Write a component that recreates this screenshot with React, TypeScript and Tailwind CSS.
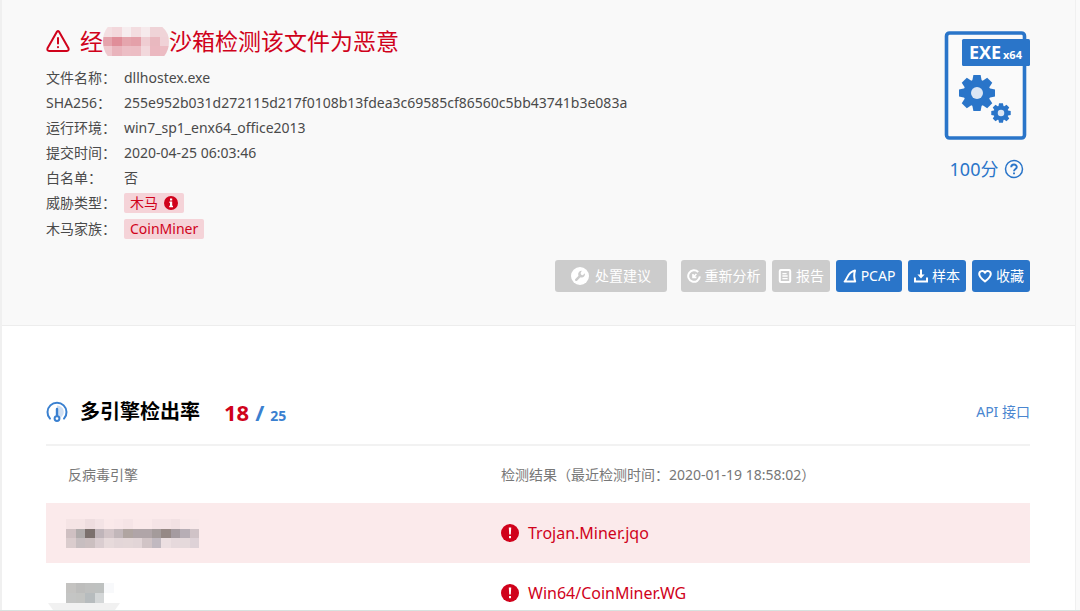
import { ReactNode } from 'react';

const CELL = 10;

interface MosaicProps {
  rows: string[][];
  label: string;
  className: string;
  clip?: string;
}

// Pixelated block that hides a vendor name
function Mosaic({ rows, label, className, clip }: MosaicProps) {
  const width = rows[0].length * CELL;
  const height = rows.length * CELL;
  return (
    <svg role="img" aria-label={label} viewBox={`0 0 ${width} ${height}`} preserveAspectRatio="none" className={className}>
      {clip && (
        <clipPath id="mosaic-clip">
          <path d={clip} />
        </clipPath>
      )}
      <g clipPath={clip ? 'url(#mosaic-clip)' : undefined} shapeRendering="crispEdges">
        {rows.map((row, y) =>
          row.map((fill, x) => <rect key={`${x}-${y}`} x={x * CELL} y={y * CELL} width={CELL} height={CELL} fill={fill} />)
        )}
      </g>
    </svg>
  );
}

const titleMosaic = [
  ['#f4dfe2', '#f3d8dc', '#f6edef', '#f3dde0', '#f6eaec', '#efd3d7', '#f0d4d8'],
  ['#e5a3ac', '#e08e99', '#e5a5ad', '#e4a0a9', '#efcdd2', '#e9b8bf', '#f0d2d7'],
  ['#efc8ce', '#e9b4bc', '#ecbec5', '#ecbdc4', '#f2d8dc', '#ebb8c0', '#ecbcc3'],
];

const engineMosaic = [
  ['#f5e4e5', '#f5e4e5', '#eedddf', '#f3e3e5', '#fae9ea', '#f8e7e9', '#f5e4e6', '#fae9ea', '#fae9ea', '#f5e4e6', '#f5e4e6', '#f2e1e3', '#f8e8e9', '#f9e9ea'],
  ['#cfc0c2', '#b0abab', '#7b706d', '#c0b5ba', '#d2c4c7', '#c2b7ba', '#b0a5a1', '#b0a5a8', '#b0a5a8', '#a49b9b', '#968986', '#a59ba0', '#b7aeb5', '#d0c3c7'],
  ['#dacccd', '#c7bec0', '#cbbfc0', '#dacdd0', '#e7dadb', '#e3d6d8', '#e4d7d8', '#e2d5d7', '#d1c4c6', '#c1b9c0', '#ecdfe1', '#e6d9dc', '#e5d9db', '#ded2d7'],
];

const secondMosaic = [
  ['#c4c3c1', '#bdbdbc', '#bfc0bf', '#bec1c0', '#f8f9fb'],
  ['#c4c5c4', '#c3c4c2', '#b7bcbe', '#d4d7d8', '#ffffff'],
];

function WarningIcon() {
  return (
    <svg viewBox="0 0 24 24" className="w-6 h-6" fill="none" stroke="#d0021b" strokeWidth="2" strokeLinejoin="round" strokeLinecap="round" aria-hidden="true">
      <path d="M10.9 2.7 1.5 19.3Q.8 21.8 3.2 22h17.6q2.4-.2 1.7-2.7L13.1 2.7Q12 1.6 10.9 2.7z" />
      <path d="M12 9v5.5M12 18v.2" />
    </svg>
  );
}

function AlertDot() {
  return (
    <svg viewBox="0 0 18 18" className="w-[18px] h-[18px] shrink-0" aria-hidden="true">
      <circle cx="9" cy="9" r="9" fill="#d0021b" />
      <path d="M7.8 3.6h2.4l-.4 7H8.2z" fill="#fff" />
      <rect x="8" y="12" width="2" height="2.2" fill="#fff" />
    </svg>
  );
}

function InfoDot() {
  return (
    <svg viewBox="0 0 14 14" className="w-3.5 h-3.5" aria-hidden="true">
      <circle cx="7" cy="7" r="7" fill="#d0021b" />
      <path d="M6 2.6h2.2v2H6zM5.4 5.6h2.8v4.2h.8v1.4H5.2V9.8H6V7h-.6z" fill="#fff" />
    </svg>
  );
}

function Gear({ cx, cy, scale, hole }: { cx: number; cy: number; scale: number; hole: string }) {
  return (
    <g transform={`translate(${cx} ${cy}) scale(${scale})`}>
      <circle r="13.5" fill="#2a75c9" />
      {[0, 45, 90, 135, 180, 225, 270, 315].map((angle) => (
        <path key={angle} d="M-5-11-3.6-18h7.2L5-11z" fill="#2a75c9" transform={`rotate(${angle})`} />
      ))}
      <circle r="6" fill={hole} />
    </g>
  );
}

function ExeIcon() {
  return (
    <svg viewBox="0 0 86 109" className="w-[86px] h-[109px]" role="img" aria-label="EXE x64">
      <rect x="2.5" y="2" width="78" height="105" rx="3" fill="#fafafa" stroke="#2a75c9" strokeWidth="3.6" />
      <rect x="18" y="8" width="68" height="27" rx="1.5" fill="#2a75c9" />
      <text x="25" y="28" fill="#fff" fontFamily="Open Sans, Noto Sans, sans-serif" fontWeight="700" fontSize="18">EXE</text>
      <text x="59" y="28" fill="#fff" fontFamily="Open Sans, Noto Sans, sans-serif" fontWeight="700" fontSize="11">x64</text>
      <Gear cx={33} cy={62} scale={1} hole="#dbe6f4" />
      <Gear cx={57} cy={82} scale={0.54} hole="#dbe6f4" />
    </svg>
  );
}

function HelpIcon() {
  return (
    <svg viewBox="0 0 20 20" className="w-5 h-5" fill="none" stroke="#2a75c9" strokeWidth="1.5" aria-hidden="true">
      <circle cx="10" cy="10" r="8.5" />
      <path d="M7.2 8.2c0-3.6 5.6-3.4 5.6-.2 0 2-2.8 2-2.8 4.2M10 13.6v1.6" strokeWidth="1.9" />
    </svg>
  );
}

function GaugeIcon() {
  return (
    <svg viewBox="0 0 22 22" className="w-[22px] h-[22px]" fill="none" aria-hidden="true">
      <path d="M11 4.5a6.5 6.5 0 0 1 6 9.5l-3 3.5h-3z" fill="#cfdff3" />
      <path d="M4 17.6a9.5 9.5 0 1 1 14 0" stroke="#3a80d0" strokeWidth="2" strokeLinecap="round" />
      <path d="M11 8v7" stroke="#3a80d0" strokeWidth="2.4" strokeLinecap="round" />
      <circle cx="11" cy="17.6" r="2.4" stroke="#3a80d0" strokeWidth="2" fill="#fff" />
    </svg>
  );
}

function WrenchIcon() {
  return (
    <svg viewBox="0 0 18 18" className="w-[18px] h-[18px]" aria-hidden="true">
      <circle cx="9" cy="9" r="9" fill="#fff" />
      <path d="M5.2 12.8 9.4 8.6" stroke="#ccc" strokeWidth="2.4" strokeLinecap="round" />
      <path d="M13.8 6.2a3.4 3.4 0 1 1-3-2.4L9.6 6l.4 1.8 1.8.4z" fill="#ccc" />
    </svg>
  );
}

const stroke = {
  viewBox: '0 0 14 14',
  className: 'w-3.5 h-3.5',
  fill: 'none',
  stroke: '#fff',
  strokeWidth: 2,
  'aria-hidden': true,
};

function RefreshIcon() {
  return (
    <svg {...stroke}>
      <path d="M11.2 3A5.8 5.8 0 1 0 12.8 7.4" />
      <path d="M6 5v3.4h3.4M6.4 8l3-3" strokeWidth="1.6" />
    </svg>
  );
}

function ReportIcon() {
  return (
    <svg {...stroke}>
      <rect x="1.8" y="1" width="10.4" height="12" rx="1" />
      <path d="M4.4 4.6h4.2M4.4 7h5.2M4.4 9.6h5.2" strokeWidth="1.4" />
    </svg>
  );
}

function FinIcon() {
  return (
    <svg {...stroke}>
      <path d="M1.6 12.6C4.6 9.6 4.6 3 12 1.6c-1.4 4-1 7 .2 11z" strokeLinejoin="round" />
    </svg>
  );
}

function DownloadIcon() {
  return (
    <svg {...stroke}>
      <path d="M7 .6v7M1 8.6v4h12v-4" />
      <path d="M3.4 5.6h7.2L7 9.6z" fill="#fff" stroke="none" />
    </svg>
  );
}

function HeartIcon() {
  return (
    <svg {...stroke}>
      <path d="M7 12.4C3.6 9.8 1.2 7.6 1.2 5 1.2 1.8 5.4.9 7 3.8 8.6.9 12.8 1.8 12.8 5c0 2.6-2.4 4.8-5.8 7.4z" strokeLinejoin="round" />
    </svg>
  );
}

interface ToolButtonProps {
  icon: ReactNode;
  label: string;
  className: string;
  disabled?: boolean;
}

function ToolButton({ icon, label, className, disabled }: ToolButtonProps) {
  return (
    <button
      type="button"
      disabled={disabled}
      className={`h-8 flex items-center justify-center rounded-[3px] text-sm text-white whitespace-nowrap ${disabled ? 'bg-[#cccccc]' : 'bg-[#2a75c9]'} ${className}`}
    >
      {icon}
      {label}
    </button>
  );
}

const details = [
  { label: '文件名称：', value: 'dllhostex.exe' },
  { label: 'SHA256：', value: '255e952b031d272115d217f0108b13fdea3c69585cf86560c5bb43741b3e083a' },
  { label: '运行环境：', value: 'win7_sp1_enx64_office2013' },
  { label: '提交时间：', value: '2020-04-25 06:03:46' },
  { label: '白名单：', value: '否' },
];

function Tag({ children }: { children: ReactNode }) {
  return <span className="h-5 px-1.5 flex items-center gap-1.5 rounded-xs bg-[#f5d3d8] text-[#d0021b]">{children}</span>;
}

function FileSummary() {
  return (
    <header className="bg-[#f9f9f9] border-b border-[#ededed] pt-6 pb-[33px] pl-11 pr-[45px]">
      <div className="flex justify-between items-start">
        <div>
          <h1 className="h-[34px] flex items-center text-[23px] text-[#d0021b] whitespace-nowrap">
            <WarningIcon />
            <span className="ml-2.5">经</span>
            <Mosaic
              rows={titleMosaic}
              label="厂商名称"
              className="w-[66px] h-[29px]"
              clip="M5 0H63Q70 6 70 15T65 30H5Q0 24 0 15T5 0z"
            />
            <span>沙箱检测该文件为恶意</span>
          </h1>
          <dl className="mt-[7px] text-sm text-[#4a4a4a]">
            {details.map((item) => (
              <div key={item.label} className="h-[25px] flex items-center">
                <dt className="w-[78px]">{item.label}</dt>
                <dd>{item.value}</dd>
              </div>
            ))}
            <div className="h-[26px] flex items-center">
              <dt className="w-[78px]">威胁类型：</dt>
              <dd>
                <Tag>
                  木马
                  <InfoDot />
                </Tag>
              </dd>
            </div>
            <div className="h-[26px] flex items-center">
              <dt className="w-[78px]">木马家族：</dt>
              <dd>
                <Tag>CoinMiner</Tag>
              </dd>
            </div>
          </dl>
        </div>
        <div className="pt-[7px] flex flex-col items-center">
          <ExeIcon />
          <p className="mt-[15px] h-7 flex items-center gap-1.5 text-lg text-[#2a75c9]">
            100分
            <HelpIcon />
          </p>
        </div>
      </div>
      <div className="mt-[18px] flex justify-end gap-1.5">
        <ToolButton icon={<WrenchIcon />} label="处置建议" className="w-28 gap-1.5 mr-2" disabled />
        <ToolButton icon={<RefreshIcon />} label="重新分析" className="w-[85px] gap-1" disabled />
        <ToolButton icon={<ReportIcon />} label="报告" className="w-[58px] gap-1" disabled />
        <ToolButton icon={<FinIcon />} label="PCAP" className="w-[66px] gap-1" />
        <ToolButton icon={<DownloadIcon />} label="样本" className="w-[58px] gap-1" />
        <ToolButton icon={<HeartIcon />} label="收藏" className="w-[58px] gap-1" />
      </div>
    </header>
  );
}

function DetectionResults() {
  return (
    <section className="pt-[62px] pl-11 pr-[45px]">
      <div className="h-12 pb-2 flex items-center border-b-2 border-[#f2f2f2] box-content">
        <GaugeIcon />
        <h2 className="ml-3 text-xl font-bold text-black">多引擎检出率</h2>
        <p className="ml-6 flex items-baseline gap-1.5 font-bold text-[#3a80d0]">
          <span className="text-[22px] text-[#d0021b]">18</span>
          <span className="text-[22px]">/</span>
          <span className="text-sm">25</span>
        </p>
        <a href="#api" className="ml-auto text-sm text-[#4a86d0]">API 接口</a>
      </div>
      <table className="w-full table-fixed text-left">
        <thead>
          <tr className="h-[57px] text-sm text-[#777]">
            <th scope="col" className="w-[455px] pl-[22px] font-normal">反病毒引擎</th>
            <th scope="col" className="font-normal">检测结果（最近检测时间：2020-01-19 18:58:02）</th>
          </tr>
        </thead>
        <tbody className="text-base text-[#d0021b]">
          <tr className="h-[60px] bg-[#fbeaeb]">
            <td className="pl-5">
              <Mosaic rows={engineMosaic} label="引擎名称" className="w-[133px] h-[29px]" />
            </td>
            <td>
              <span className="flex items-center gap-[9px]">
                <AlertDot />
                Trojan.Miner.jqo
              </span>
            </td>
          </tr>
          <tr className="h-[60px]">
            <td className="pl-5">
              <Mosaic rows={secondMosaic} label="引擎名称" className="w-12 h-5" />
            </td>
            <td>
              <span className="flex items-center gap-[9px]">
                <AlertDot />
                Win64/CoinMiner.WG
              </span>
            </td>
          </tr>
        </tbody>
      </table>
    </section>
  );
}

export default function App() {
  return (
    <main
      lang="zh-CN"
      className="relative h-screen overflow-hidden bg-[#fafafa] pr-1 font-['Noto_Sans','Noto_Sans_CJK_SC',sans-serif]"
    >
      <div className="min-h-full bg-white border-l-2 border-r border-[#f0f0f0]">
        <FileSummary />
        <DetectionResults />
      </div>
      <div className="absolute inset-x-0 bottom-0 border-b border-[#d8e2df]" aria-hidden="true">
        <svg viewBox="0 0 72 7" className="ml-12 w-[72px] h-[7px]">
          <path d="M0 0h72l-5 7H5z" fill="#f1f1f1" />
        </svg>
      </div>
    </main>
  );
}
